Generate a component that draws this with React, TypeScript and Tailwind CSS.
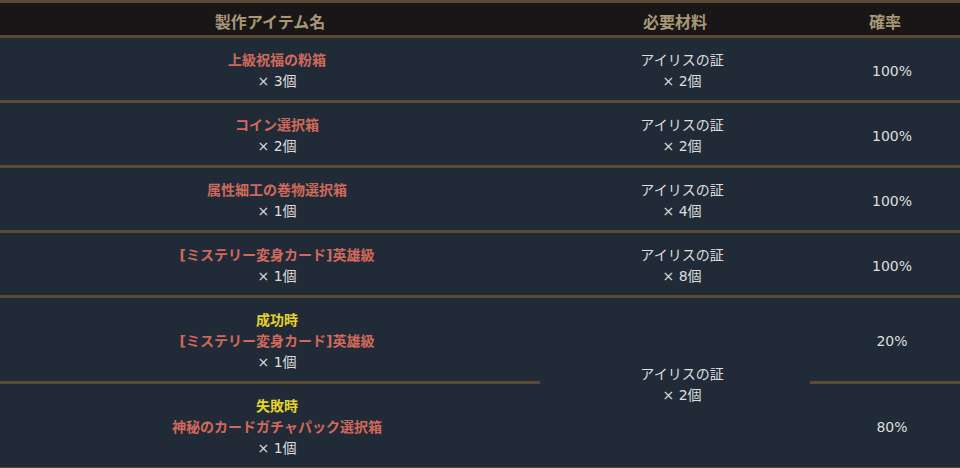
const red = 'font-bold text-[#d0695b]';
const yellow = 'font-bold text-[#e6d22c]';

type Row = {
  name: string;
  qty: string;
  material: string;
  rate: string;
};

const rows: Row[] = [
  { name: '上級祝福の粉箱', qty: '× 3個', material: '× 2個', rate: '100%' },
  { name: 'コイン選択箱', qty: '× 2個', material: '× 2個', rate: '100%' },
  { name: '属性細工の巻物選択箱', qty: '× 1個', material: '× 4個', rate: '100%' },
  { name: '[ミステリー変身カード]英雄級', qty: '× 1個', material: '× 8個', rate: '100%' },
];

const cell = 'pl-[14px] pt-[12px] pb-[8px] text-center align-middle';
const sep = 'border-b-[3px] border-[#5b4936]';

export default function App() {
  return (
    <div
      className="h-[468px] w-[960px] overflow-hidden bg-[#212b38] text-[14px] leading-[21px] text-[#dedede]"
      style={{ fontFamily: '"DejaVu Sans", "Noto Sans CJK JP", sans-serif' }}
    >
      <table className="w-full table-fixed border-collapse">
        <colgroup>
          <col className="w-[540px]" />
          <col className="w-[270px]" />
          <col className="w-[150px]" />
        </colgroup>
        <thead>
          <tr className="h-[35px] border-y-[3px] border-[#5b4936] bg-[#181616] text-[16px] font-bold text-[#a99877]">
            <th className="pt-[6px]">製作アイテム名</th>
            <th className="pt-[6px]">必要材料</th>
            <th className="pt-[6px]">確率</th>
          </tr>
        </thead>
        <tbody>
          {rows.map((row) => (
            <tr key={row.name} className={`h-[62px] ${sep}`}>
              <td className={cell}>
                <div className={red}>{row.name}</div>
                <div>{row.qty}</div>
              </td>
              <td className={cell}>
                <div>アイリスの証</div>
                <div>{row.material}</div>
              </td>
              <td className={cell}>{row.rate}</td>
            </tr>
          ))}
          <tr className="h-[82px]">
            <td className={`${cell} ${sep}`}>
              <div className={yellow}>成功時</div>
              <div className={red}>[ミステリー変身カード]英雄級</div>
              <div>× 1個</div>
            </td>
            <td rowSpan={2} className={`${cell} ${sep}`}>
              <div>アイリスの証</div>
              <div>× 2個</div>
            </td>
            <td className={`${cell} ${sep}`}>20%</td>
          </tr>
          <tr className="h-[82px]">
            <td className={`${cell} ${sep}`}>
              <div className={yellow}>失敗時</div>
              <div className={red}>神秘のカードガチャパック選択箱</div>
              <div>× 1個</div>
            </td>
            <td className={`${cell} ${sep}`}>80%</td>
          </tr>
        </tbody>
      </table>
    </div>
  );
}
